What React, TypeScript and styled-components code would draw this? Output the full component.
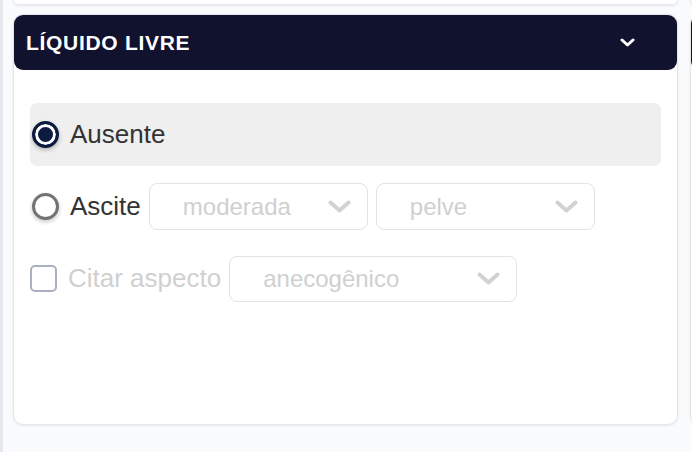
import React from "react";
import styled, { createGlobalStyle } from "styled-components";

const Global = createGlobalStyle`
  html, body { margin: 0; padding: 0; }
  body {
    background: #fafbfc;
    font-family: "Liberation Sans", Arial, Helvetica, sans-serif;
    overflow: hidden;
  }
`;

const Viewport = styled.div`
  width: 692px;
  height: 452px;
  box-sizing: border-box;
  border-left: 3px solid #e6e8ed;
  overflow: hidden;
`;

const Grid = styled.div`
  display: grid;
  grid-template-columns: 665px 665px;
  column-gap: 12px;
  row-gap: 9px;
  padding-left: 10px;
`;

const CardTail = styled.div`
  height: 4px;
  background: #ffffff;
  border: 1px solid #e3e6eb;
  border-top: none;
  border-radius: 0 0 10px 10px;
  box-shadow: 0 1px 3px rgba(15, 23, 42, 0.08);
`;

const Card = styled.section`
  height: 411px;
  box-sizing: border-box;
  background: #ffffff;
  border: 1px solid #e3e6eb;
  border-radius: 10px;
  box-shadow: 0 1px 3px rgba(15, 23, 42, 0.08);
  display: flex;
  flex-direction: column;
`;

const Header = styled.header`
  height: 55px;
  flex: none;
  background: #11122e;
  border-radius: 9px;
  display: flex;
  align-items: center;
  justify-content: space-between;
  padding: 0 42px 0 12px;
`;

const Title = styled.h2`
  margin: 0;
  color: #ffffff;
  font-family: "Liberation Sans", Arial, Helvetica, sans-serif;
  font-weight: 700;
  font-size: 21px;
  letter-spacing: 0.7px;
`;

const Body = styled.div`
  padding: 33px 16px 0 16px;
  display: flex;
  flex-direction: column;
  gap: 9px;
`;

const Row = styled.div<{ $active?: boolean }>`
  height: 63px;
  display: flex;
  align-items: center;
  gap: 8px;
  padding-left: 2px;
  border-radius: 7px;
  background: ${(p) => (p.$active ? "#efefef" : "transparent")};
`;

const Radio = styled.span<{ $checked?: boolean }>`
  width: 27px;
  height: 27px;
  flex: none;
  box-sizing: border-box;
  border-radius: 50%;
  margin-right: 3px;
  background: ${(p) => (p.$checked ? "#0d1b40" : "#ffffff")};
  border: 3px solid ${(p) => (p.$checked ? "#0d1b40" : "#737373")};
  box-shadow: ${(p) =>
    p.$checked
      ? "inset 0 0 0 3px #ffffff, 0 2px 4px rgba(0,0,0,0.25)"
      : "0 2px 4px rgba(0,0,0,0.22)"};
`;

const Checkbox = styled.span`
  width: 27px;
  height: 27px;
  flex: none;
  box-sizing: border-box;
  border: 2px solid #a9b0bf;
  border-radius: 5px;
  margin-left: -2px;
  margin-right: 3px;
  background: #ffffff;
`;

const Label = styled.span<{ $disabled?: boolean }>`
  font-size: 26px;
  color: ${(p) => (p.$disabled ? "#d0d0d0" : "#333333")};
  white-space: nowrap;
`;

const Select = styled.div<{ $w: number; $h?: number }>`
  width: ${(p) => p.$w}px;
  height: ${(p) => p.$h ?? 47}px;
  box-sizing: border-box;
  border: 1.5px solid #e3e3e3;
  border-radius: 8px;
  background: #ffffff;
  display: flex;
  align-items: center;
  justify-content: space-between;
  padding: 0 16px 0 33px;
  font-size: 24px;
  color: #d0d0d0;
`;

const Chevron = ({ w, h, sw, color }: { w: number; h: number; sw: number; color: string }) => (
  <svg width={w} height={h} viewBox={`0 0 ${w} ${h}`} fill="none">
    <polyline
      points={`${sw / 2 + 0.5},${sw / 2 + 0.5} ${w / 2},${h - sw / 2 - 0.5} ${w - sw / 2 - 0.5},${sw / 2 + 0.5}`}
      stroke={color}
      strokeWidth={sw}
      strokeLinecap="round"
      strokeLinejoin="round"
    />
  </svg>
);

export default function App() {
  return (
    <>
      <Global />
      <Viewport>
        <Grid>
          <CardTail />
          <CardTail />
          <Card>
            <Header>
              <Title>LÍQUIDO LIVRE</Title>
              <Chevron w={15} h={9} sw={3} color="#ffffff" />
            </Header>
            <Body>
              <Row $active>
                <Radio $checked />
                <Label>Ausente</Label>
              </Row>
              <Row>
                <Radio />
                <Label>Ascite</Label>
                <Select $w={219}>
                  moderada
                  <Chevron w={23} h={13} sw={4} color="#d2d2d2" />
                </Select>
                <Select $w={219}>
                  pelve
                  <Chevron w={23} h={13} sw={4} color="#d2d2d2" />
                </Select>
              </Row>
              <Row>
                <Checkbox />
                <Label $disabled>Citar aspecto</Label>
                <Select $w={288} $h={46}>
                  anecogênico
                  <Chevron w={23} h={13} sw={4} color="#d2d2d2" />
                </Select>
              </Row>
            </Body>
          </Card>
          <Card>
            <Header>
              <Title>&nbsp;</Title>
            </Header>
          </Card>
        </Grid>
      </Viewport>
    </>
  );
}
